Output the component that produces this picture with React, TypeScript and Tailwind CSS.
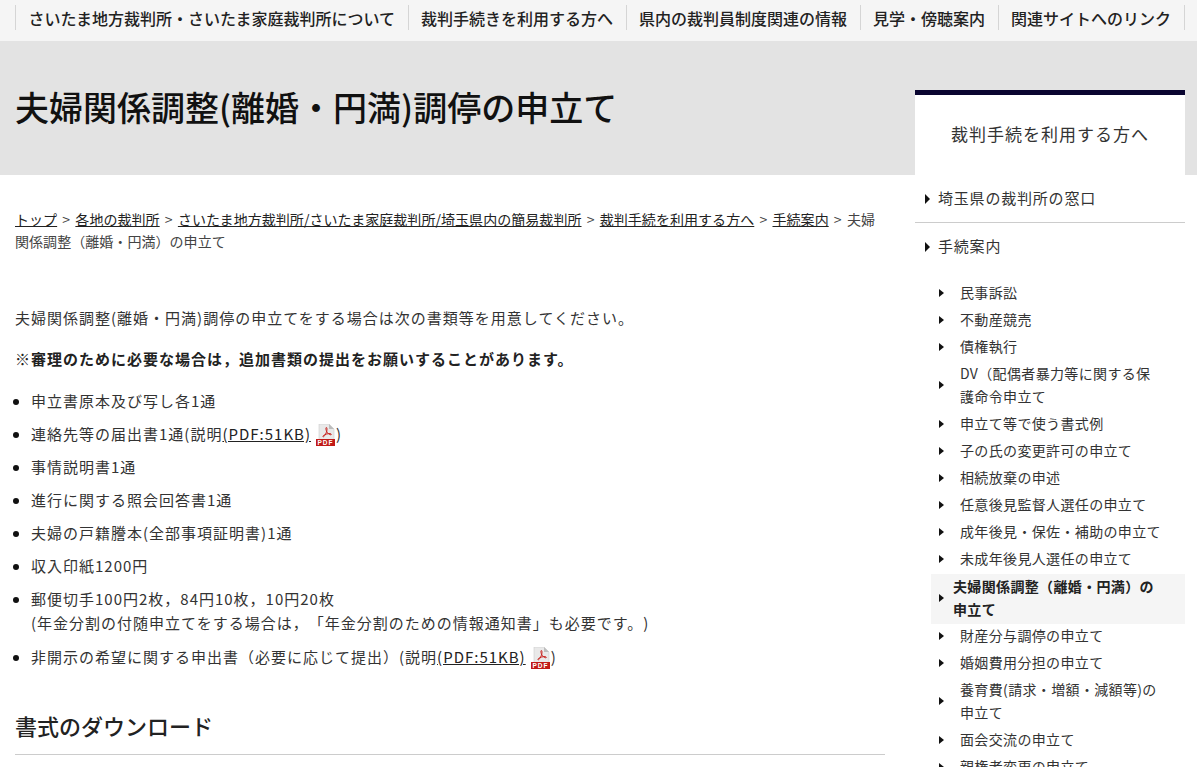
const navItems = [
  'さいたま地方裁判所・さいたま家庭裁判所について',
  '裁判手続きを利用する方へ',
  '県内の裁判員制度関連の情報',
  '見学・傍聴案内',
  '関連サイトへのリンク',
];

const crumbs = [
  'トップ',
  '各地の裁判所',
  'さいたま地方裁判所/さいたま家庭裁判所/埼玉県内の簡易裁判所',
  '裁判手続を利用する方へ',
  '手続案内',
];

const sideItems: { label: string; active?: boolean }[] = [
  { label: '民事訴訟' },
  { label: '不動産競売' },
  { label: '債権執行' },
  { label: 'DV（配偶者暴力等に関する保護命令申立て' },
  { label: '申立て等で使う書式例' },
  { label: '子の氏の変更許可の申立て' },
  { label: '相続放棄の申述' },
  { label: '任意後見監督人選任の申立て' },
  { label: '成年後見・保佐・補助の申立て' },
  { label: '未成年後見人選任の申立て' },
  { label: '夫婦関係調整（離婚・円満）の申立て', active: true },
  { label: '財産分与調停の申立て' },
  { label: '婚姻費用分担の申立て' },
  { label: '養育費(請求・増額・減額等)の申立て' },
  { label: '面会交流の申立て' },
  { label: '親権者変更の申立て' },
];

function PdfIcon() {
  return (
    <svg viewBox="0 0 20 22" className="ml-[5px] inline-block h-[22px] w-[20px] align-[-6px]">
      <path d="M3 0h10l5 5v12H3z" fill="#e9e9e9" stroke="#cfcfcf" strokeWidth="0.6" />
      <path d="M13 0v5h5z" fill="#bdbdbd" />
      <path
        d="M10.4 3.5c-.9 0-.5 2.6.4 4.2.7 1.3 2.6 3.2 4 3.1 1-.1.6-1.200-.8-1.200-2-.1-5.200.7-6.600 2-.9.9-.5 1.500.3 1 1.300-.8 2.800-3.900 3.200-6.200.2-1.300.1-2.900-.500-2.900z"
        fill="none"
        stroke="#c8201c"
        strokeWidth="1"
      />
      <rect x="0" y="15" width="19" height="7" fill="#c11a17" />
      <text x="9.500" y="21" textAnchor="middle" fontSize="6.500" fontWeight="700" fill="#fff" fontFamily="Liberation Sans, sans-serif">
        PDF
      </text>
    </svg>
  );
}

function Arrow() {
  return <span className="h-0 w-0 shrink-0 border-y-[4px] border-l-[5px] border-y-transparent border-l-[#111]" />;
}

function BigArrow() {
  return <span className="h-0 w-0 shrink-0 border-y-[5px] border-l-[5px] border-y-transparent border-l-[#111]" />;
}

export default function App() {
  return (
    <div className="h-[767px] overflow-hidden bg-white font-['Noto_Sans_CJK_JP',sans-serif] text-[#333] [text-spacing-trim:space-all]">
      {/* Global nav */}
      <nav className="flex h-[41px] items-start bg-[#f5f5f5] pl-[15px] pt-[5px]">
        {navItems.map((item) => (
          <span
            key={item}
            className="flex h-[25px] items-center whitespace-nowrap border-l border-[#d5d5d5] px-[12.5px] text-[16px] font-medium leading-none text-[#222] last:border-r"
          >
            {item}
          </span>
        ))}
      </nav>

      <div className="flex bg-[linear-gradient(#e3e3e3_134px,#ffffff_134px)] pl-[15px] pr-[12px]">
        {/* Main column */}
        <main className="w-[870px] shrink-0">
          <h1 className="flex h-[134px] items-start pt-[41px] text-[34px] font-medium leading-[50px] text-[#111]">
            夫婦関係調整(離婚・円満)調停の申立て
          </h1>

          <p className="mt-[33px] text-[14px] leading-[22px] tracking-[0.05px] text-[#444]">
            {crumbs.map((crumb) => (
              <span key={crumb}>
                <a className="text-[#222] underline">{crumb}</a>
                <span className="mx-[2px]"> &gt; </span>
              </span>
            ))}
            夫婦関係調整（離婚・円満）の申立て
          </p>

          <p className="mt-[54px] text-[15px] leading-[24px] tracking-[1px]">
            夫婦関係調整(離婚・円満)調停の申立てをする場合は次の書類等を用意してください。
          </p>
          <p className="mt-[17px] text-[15px] font-bold leading-[24px] tracking-[1px] text-[#222]">
            ※審理のために必要な場合は，追加書類の提出をお願いすることがあります。
          </p>

          <ul className="mt-[18px] flex list-disc flex-col gap-[9px] pl-[16px] text-[15px] leading-[24px] tracking-[1px] marker:text-[#111]">
            <li>申立書原本及び写し各1通</li>
            <li>
              連絡先等の届出書1通(説明<a className="text-[#222] underline">(PDF:51KB)</a>
              <PdfIcon />)
            </li>
            <li>事情説明書1通</li>
            <li>進行に関する照会回答書1通</li>
            <li>夫婦の戸籍謄本(全部事項証明書)1通</li>
            <li>収入印紙1200円</li>
            <li>
              郵便切手100円2枚，84円10枚，10円20枚
              <br />
              (年金分割の付随申立てをする場合は，「年金分割のための情報通知書」も必要です。)
            </li>
            <li className="mt-[1px]">
              非開示の希望に関する申出書（必要に応じて提出）(説明<a className="text-[#222] underline">(PDF:51KB)</a>
              <PdfIcon />)
            </li>
          </ul>

          <h2 className="mt-[41px] border-b border-[#ccc] pb-[13px] text-[22px] font-medium leading-[31px] text-[#222]">
            書式のダウンロード
          </h2>
        </main>

        {/* Side menu */}
        <aside className="ml-[30px] w-[270px] shrink-0 pt-[49px]">
          <div className="flex h-[85px] items-center justify-center border-t-[5px] border-[#0a0530] bg-white pb-[2px] text-[17px] tracking-[1px]">
            裁判手続を利用する方へ
          </div>
          <div className="flex h-[48px] items-center gap-[8px] border-b border-[#ccc] pl-[10px] text-[15px] tracking-[0.8px]">
            <BigArrow />
            埼玉県の裁判所の窓口
          </div>
          <div className="flex h-[47px] items-center gap-[8px] pl-[10px] text-[15px] tracking-[0.8px]">
            <BigArrow />
            手続案内
          </div>
          <ul className="ml-[16px] mt-[9px] flex flex-col text-[14px] leading-[23px] tracking-[0.35px]">
            {sideItems.map((item) => (
              <li
                key={item.label}
                className={
                  item.active
                    ? '-mb-[2px] mt-[2px] flex items-center gap-[9px] bg-[#f5f5f5] pb-[3px] pl-[8px] pt-[1px] font-bold text-[#222]'
                    : 'flex min-h-[27px] items-center gap-[16px] py-[2px] pl-[8px]'
                }
              >
                <Arrow />
                <span className="pr-[23px]">{item.label}</span>
              </li>
            ))}
          </ul>
        </aside>
      </div>
    </div>
  );
}
